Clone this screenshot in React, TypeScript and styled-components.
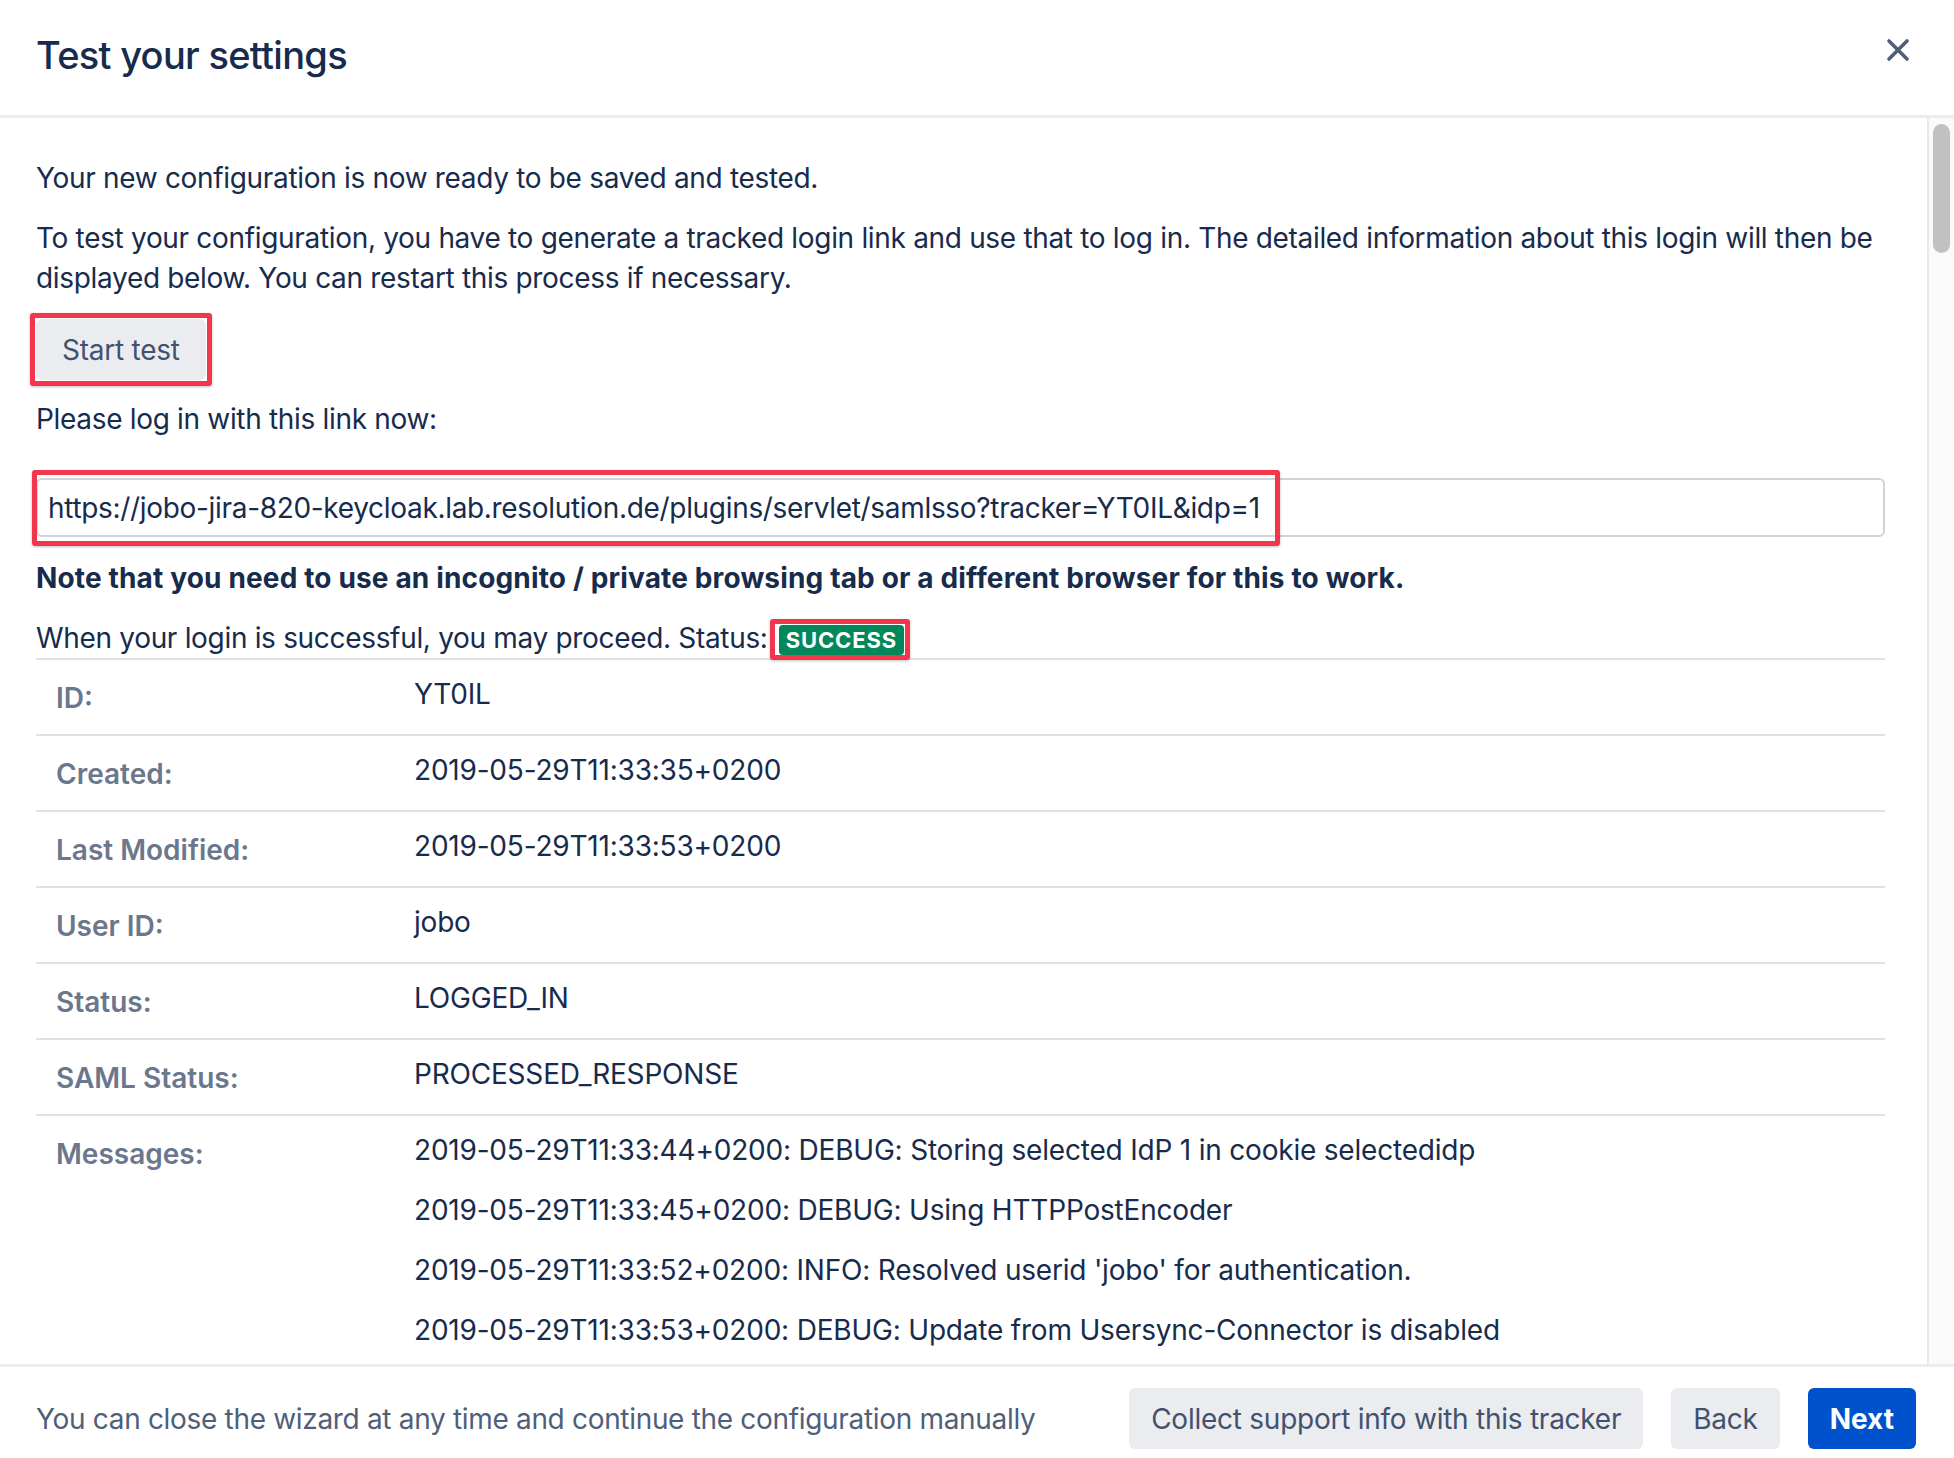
import styled, { createGlobalStyle } from 'styled-components';

const GlobalStyle = createGlobalStyle`
  html, body {
    margin: 0;
    padding: 0;
    background: #fff;
    overflow: hidden;
  }
  body {
    font-family: Inter, "Liberation Sans", sans-serif;
    color: #172b4d;
    letter-spacing: -0.32px;
  }
  * {
    box-sizing: border-box;
  }
`;

const details = [
  { label: 'ID:', value: 'YT0IL' },
  { label: 'Created:', value: '2019-05-29T11:33:35+0200' },
  { label: 'Last Modified:', value: '2019-05-29T11:33:53+0200' },
  { label: 'User ID:', value: 'jobo' },
  { label: 'Status:', value: 'LOGGED_IN' },
  { label: 'SAML Status:', value: 'PROCESSED_RESPONSE' },
];

const messages = [
  '2019-05-29T11:33:44+0200: DEBUG: Storing selected IdP 1 in cookie selectedidp',
  '2019-05-29T11:33:45+0200: DEBUG: Using HTTPPostEncoder',
  "2019-05-29T11:33:52+0200: INFO: Resolved userid 'jobo' for authentication.",
  '2019-05-29T11:33:53+0200: DEBUG: Update from Usersync-Connector is disabled',
];

const loginUrl =
  'https://jobo-jira-820-keycloak.lab.resolution.de/plugins/servlet/samlsso?tracker=YT0IL&idp=1';

export default function App() {
  return (
    <>
      <GlobalStyle />
      <Dialog>
        <Header>
          <Title>Test your settings</Title>
          <CloseButton aria-label="Close">
            <svg width="24" height="24" viewBox="0 0 24 24">
              <path
                d="M3 3 L21 21 M21 3 L3 21"
                stroke="currentColor"
                strokeWidth="3.6"
                strokeLinecap="round"
              />
            </svg>
          </CloseButton>
        </Header>

        <Body>
          <Content>
            <Text>Your new configuration is now ready to be saved and tested.</Text>
            <Text $gap={20}>
              To test your configuration, you have to generate a tracked login link and use
              that to log in. The detailed information about this login will then be
              displayed below. You can restart this process if necessary.
            </Text>

            <StartRow>
              <Marked>
                <Button $wide>Start test</Button>
              </Marked>
            </StartRow>

            <Text $gap={19}>Please log in with this link now:</Text>

            <LinkField>
              <LinkInput readOnly value={loginUrl} />
              <LinkMark />
            </LinkField>

            <Text $gap={21} $bold>
              Note that you need to use an incognito / private browsing tab or a different
              browser for this to work.
            </Text>

            <Text $gap={20}>
              When your login is successful, you may proceed. Status:
              <Marked $left={-9} $right={-6} $top={-6} $bottom={-5} $spaced>
                <Lozenge>Success</Lozenge>
              </Marked>
            </Text>

            <DetailTable>
              <tbody>
                {details.map((row) => (
                  <tr key={row.label}>
                    <Label>{row.label}</Label>
                    <Value>{row.value}</Value>
                  </tr>
                ))}
                <tr>
                  <Label>Messages:</Label>
                  <Value>
                    {messages.map((m) => (
                      <Message key={m}>{m}</Message>
                    ))}
                  </Value>
                </tr>
              </tbody>
            </DetailTable>
          </Content>

          <ScrollTrack>
            <ScrollThumb />
          </ScrollTrack>
        </Body>

        <Footer>
          <FooterNote>
            You can close the wizard at any time and continue the configuration manually
          </FooterNote>
          <FooterActions>
            <Button>Collect support info with this tracker</Button>
            <Button>Back</Button>
            <Button $primary>Next</Button>
          </FooterActions>
        </Footer>
      </Dialog>
    </>
  );
}

const RED = '#f2374d';

const Dialog = styled.div`
  width: 1954px;
  height: 1458px;
  display: flex;
  flex-direction: column;
  background: #fff;
`;

const Header = styled.header`
  flex: none;
  height: 118px;
  display: flex;
  align-items: center;
  justify-content: space-between;
  padding: 0 42px 6px 36px;
  border-bottom: 3px solid #ebecf0;
`;

const Title = styled.h1`
  margin: 0;
  font-size: 38px;
  line-height: 48px;
  font-weight: 500;
  letter-spacing: -0.7px;
  color: #172b4d;
`;

const CloseButton = styled.button`
  display: flex;
  align-items: center;
  justify-content: center;
  width: 28px;
  height: 28px;
  margin-bottom: 9px;
  padding: 0;
  border: none;
  background: none;
  color: #505f79;
  cursor: pointer;
`;

const Body = styled.div`
  flex: 1;
  min-height: 0;
  display: flex;
  overflow: hidden;
`;

const Content = styled.div`
  flex: 1;
  min-width: 0;
  padding: 40px 42px 0 36px;
  overflow: hidden;
`;

const Text = styled.p<{ $gap?: number; $bold?: boolean }>`
  margin: ${({ $gap = 0 }) => $gap}px 0 0;
  font-size: 28px;
  line-height: 40px;
  font-weight: ${({ $bold }) => ($bold ? 700 : 400)};
  letter-spacing: ${({ $bold }) => ($bold ? '0.15px' : '-0.32px')};
  color: #172b4d;
`;

const StartRow = styled.div`
  margin-top: 21px;
  display: flex;
`;

const Marked = styled.span<{
  $left?: number;
  $right?: number;
  $top?: number;
  $bottom?: number;
  $spaced?: boolean;
}>`
  position: relative;
  display: inline-flex;
  vertical-align: middle;
  margin-left: ${({ $spaced }) => ($spaced ? '11px' : '0')};

  &::after {
    content: '';
    position: absolute;
    left: ${({ $left = -6 }) => $left}px;
    right: ${({ $right = -6 }) => $right}px;
    top: ${({ $top = -6 }) => $top}px;
    bottom: ${({ $bottom = -6 }) => $bottom}px;
    border: 5px solid ${RED};
    border-radius: 3px;
    box-shadow: 0 1px 3px rgba(0, 0, 0, 0.25);
    pointer-events: none;
  }
`;

const Button = styled.button<{ $primary?: boolean; $wide?: boolean }>`
  height: 61px;
  padding: 0 ${({ $wide }) => ($wide ? 26 : 22)}px;
  border: none;
  border-radius: 6px;
  font-family: inherit;
  font-size: 28px;
  letter-spacing: ${({ $primary }) => ($primary ? '0' : '-0.25px')};
  font-weight: ${({ $primary }) => ($primary ? 700 : 400)};
  color: ${({ $primary }) => ($primary ? '#fff' : '#42526e')};
  background: ${({ $primary }) => ($primary ? '#0052cc' : '#ebecf0')};
  white-space: nowrap;
  cursor: pointer;
`;

const LinkField = styled.div`
  position: relative;
  margin-top: 39px;
`;

const LinkInput = styled.input`
  display: block;
  width: 100%;
  height: 59px;
  padding: 0 10px;
  border: 2px solid #cfd4db;
  border-radius: 6px;
  font-family: inherit;
  font-size: 28px;
  letter-spacing: -0.32px;
  color: #172b4d;
  background: #fff;
  outline: none;
`;

const LinkMark = styled.div`
  position: absolute;
  left: -4px;
  top: -8px;
  width: 1248px;
  height: 76px;
  border: 5px solid ${RED};
  border-radius: 3px;
  box-shadow: 0 1px 3px rgba(0, 0, 0, 0.25);
  pointer-events: none;
`;

const Lozenge = styled.span`
  display: inline-flex;
  align-items: center;
  height: 30px;
  padding: 0 7px;
  border-radius: 4px;
  background: #00875a;
  color: #fff;
  font-size: 22px;
  font-weight: 700;
  text-transform: uppercase;
  letter-spacing: 0.9px;
`;

const DetailTable = styled.table`
  width: 100%;
  border-collapse: collapse;

  tr {
    border-top: 2px solid #dfe1e6;
  }
`;

const Label = styled.th`
  width: 378px;
  padding: 18px 0 16px 20px;
  text-align: left;
  vertical-align: top;
  font-size: 28px;
  line-height: 40px;
  font-weight: 600;
  letter-spacing: 0;
  color: #6b778c;
`;

const Value = styled.td`
  padding: 14px 0 20px;
  vertical-align: top;
  font-size: 28px;
  line-height: 40px;
  letter-spacing: -0.2px;
  color: #172b4d;
`;

const Message = styled.div`
  & + & {
    margin-top: 20px;
  }
`;

const ScrollTrack = styled.div`
  flex: none;
  width: 27px;
  padding: 6px 4px;
  border-left: 2px solid #e8e8e8;
  background: #fafafa;
`;

const ScrollThumb = styled.div`
  height: 129px;
  border-radius: 9px;
  background: #c1c1c1;
`;

const Footer = styled.footer`
  flex: none;
  height: 94px;
  display: flex;
  align-items: flex-start;
  justify-content: space-between;
  padding: 21px 38px 0 36px;
  border-top: 3px solid #ebecf0;
`;

const FooterNote = styled.span`
  height: 61px;
  display: flex;
  align-items: center;
  font-size: 28px;
  color: #505f79;
`;

const FooterActions = styled.div`
  display: flex;
  gap: 28px;
`;
